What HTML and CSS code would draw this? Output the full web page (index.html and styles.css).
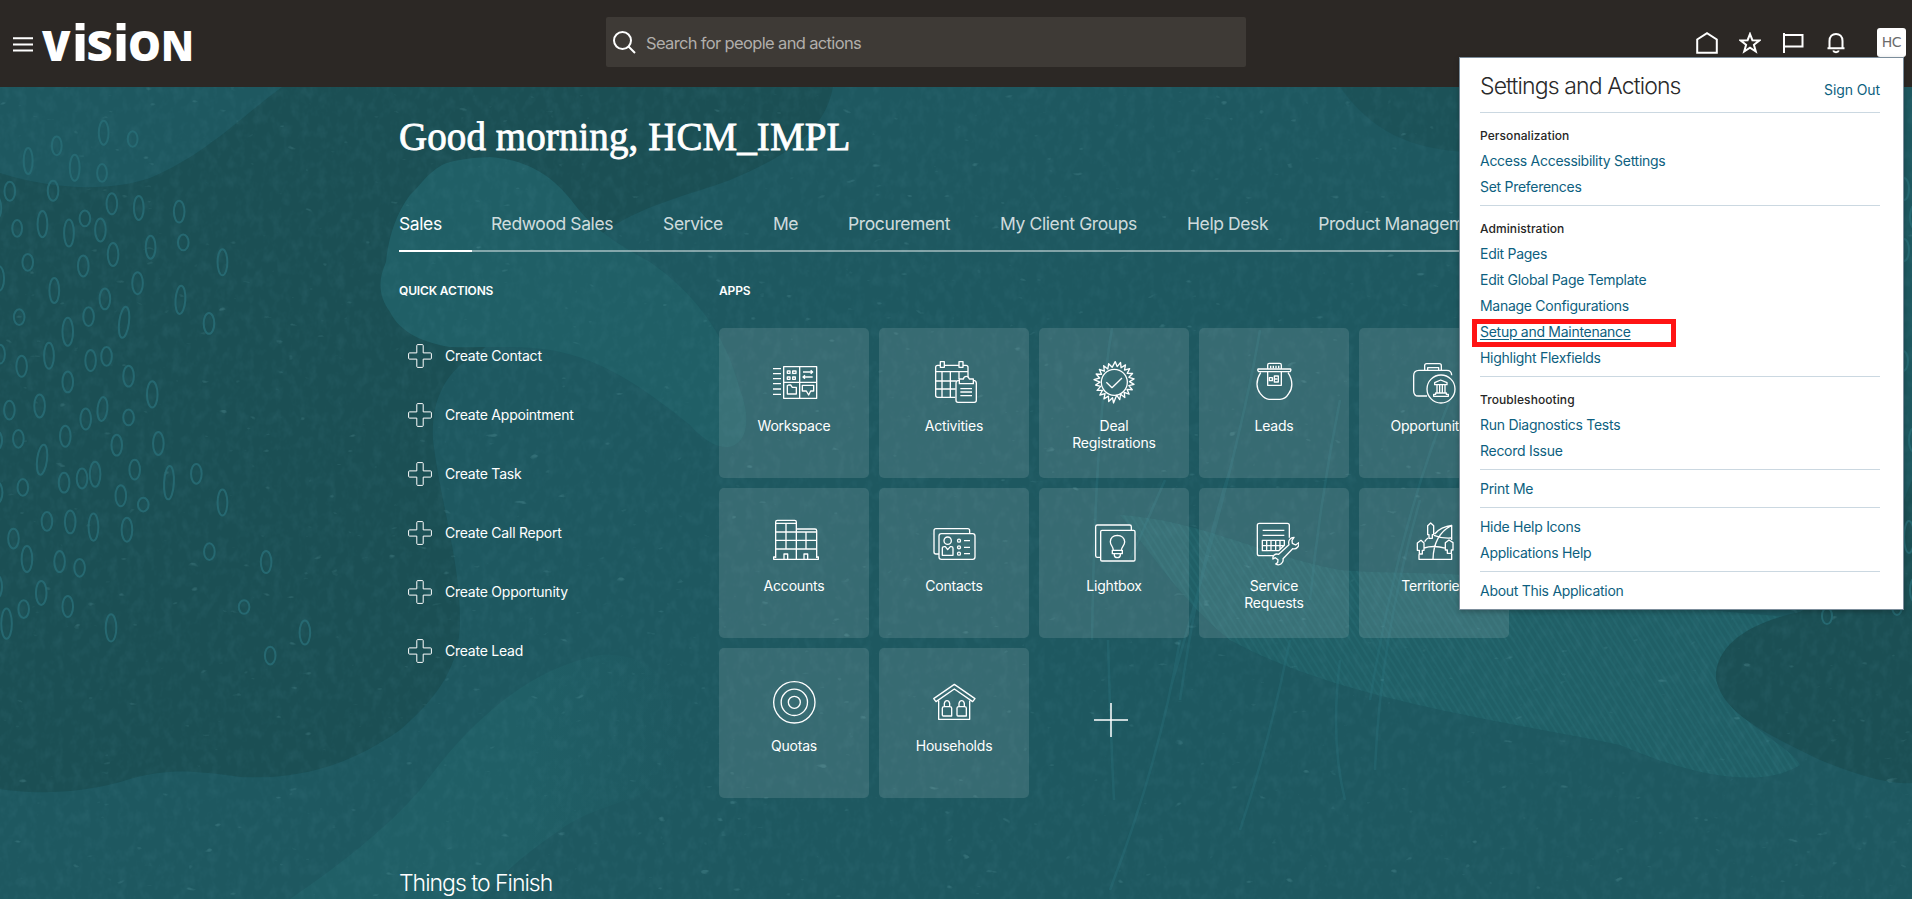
FILE: index.html
```html
<!DOCTYPE html>
<html lang="en">
<head>
<meta charset="utf-8">
<title>Vision</title>
<link rel="stylesheet" href="styles.css">
</head>
<body>
<svg class="backdrop" viewBox="0 0 1912 899" width="1912" height="899" aria-hidden="true">
  <defs>
    <filter id="grain" x="0" y="0" width="100%" height="100%">
      <feTurbulence type="fractalNoise" baseFrequency="0.11 0.08" numOctaves="3" seed="4"/>
      <feColorMatrix values="0 0 0 0 0.07  0 0 0 0 0.25  0 0 0 0 0.3  1.6 0 0 0 -0.7"/>
    </filter>
    <filter id="flecks" x="0" y="0" width="100%" height="100%">
      <feTurbulence type="fractalNoise" baseFrequency="0.07 0.13" numOctaves="2" seed="21"/>
      <feColorMatrix values="0 0 0 0 0.2  0 0 0 0 0.5  0 0 0 0 0.54  0 9 0 0 -6.9"/>
    </filter>
    <linearGradient id="fade" x1="0" y1="0" x2="1" y2="0"><stop offset="0" stop-color="#205f66"/><stop offset=".6" stop-color="#205f66"/><stop offset="1" stop-color="#205f66" stop-opacity="0"/></linearGradient>
    <pattern id="hatch" width="6" height="6" patternUnits="userSpaceOnUse" patternTransform="rotate(-32)">
      <path d="M2 0V6" stroke="#2a7379" stroke-width="1.4" opacity=".38"/>
    </pattern>
  </defs>
  <rect width="1912" height="899" fill="#1e5860"/>
  <path d="M282 87C240 118 205 155 150 178C115 190 60 192 0 173V789C30 794 80 795 130 779C170 768 195 771 240 777C300 780 350 765 400 730C440 695 460 665 460 620C460 560 440 500 433 440C431 400 445 370 480 352L600 235C640 205 690 195 730 180C790 155 825 130 833 87Z" fill="#1b4f54"/>
  <path d="M490 157C465 158 450 161 442 165C425 175 420 186 410 195C395 215 388 240 386 262C378 280 378 295 390 312C400 333 425 343 450 347C480 348 520 345 550 350C600 358 640 385 690 425C730 470 760 440 740 390C725 330 690 290 650 262C610 240 590 225 575 205C555 178 530 160 490 157Z" fill="#205f66"/>
  <path d="M290 899C340 865 385 830 420 790C470 720 530 668 600 655C660 650 690 700 680 760C665 800 600 800 560 830C530 850 500 875 480 899Z" fill="url(#fade)"/>
  <path d="M1340 87C1370 130 1410 150 1470 152V87Z" fill="#1b4f54" opacity=".6"/>
  <path d="M1120 515C1200 520 1260 555 1340 570C1400 575 1440 570 1510 580C1600 600 1700 610 1800 618C1760 640 1720 660 1716 680C1730 720 1790 745 1800 765C1760 790 1690 775 1620 745C1500 720 1340 700 1230 640C1180 600 1150 550 1120 515Z" fill="#205f66"/>
  <path d="M1120 515C1200 520 1260 555 1340 570C1400 575 1440 570 1510 580C1600 600 1700 610 1800 618C1760 640 1720 660 1716 680C1730 720 1790 745 1800 765C1760 790 1690 775 1620 745C1500 720 1340 700 1230 640C1180 600 1150 550 1120 515Z" fill="url(#hatch)"/>
  <path d="M1912 480L1880 560L1800 612C1750 622 1715 645 1716 678C1722 715 1770 735 1820 760C1850 772 1885 785 1912 783Z" fill="#1b4f54"/>
  <g fill="none" stroke="#28707a" stroke-width="2.5" opacity=".4">
    <path d="M1112 328Q1095 430 1092 640M1108 640Q1110 720 1114 800M1180 640Q1160 760 1110 890M1165 480L1130 560M1260 330Q1240 450 1170 690M1230 470Q1200 560 1180 700M1340 400Q1320 500 1310 600M1450 400Q1400 520 1370 700M1420 500Q1380 640 1375 770M1290 640Q1270 740 1240 830M1340 660Q1330 740 1345 800"/>
  </g>
  <rect y="87" width="1912" height="812" filter="url(#grain)" opacity=".2"/>
  <rect y="87" width="1912" height="812" filter="url(#flecks)" opacity=".2"/>
  <g transform="translate(0 80) scale(.40816 .5223)" class="pebbles">
    <ellipse cx="254" cy="101" rx="12" ry="23"/><ellipse cx="325" cy="113" rx="12" ry="15"/><ellipse cx="139" cy="126" rx="12" ry="18"/><ellipse cx="69" cy="155" rx="11" ry="25"/><ellipse cx="183" cy="168" rx="12" ry="25"/><ellipse cx="250" cy="178" rx="12" ry="17"/>
    <ellipse cx="24" cy="213" rx="13" ry="18"/><ellipse cx="130" cy="212" rx="13" ry="19"/><ellipse cx="274" cy="237" rx="13" ry="20"/><ellipse cx="340" cy="245" rx="12" ry="23"/><ellipse cx="439" cy="252" rx="13" ry="21"/><ellipse cx="208" cy="265" rx="13" ry="15"/><ellipse cx="104" cy="276" rx="12" ry="25"/><ellipse cx="42" cy="284" rx="12" ry="16"/><ellipse cx="169" cy="293" rx="12" ry="26"/><ellipse cx="246" cy="287" rx="13" ry="22"/><ellipse cx="449" cy="311" rx="13" ry="15"/><ellipse cx="369" cy="320" rx="12" ry="22"/><ellipse cx="277" cy="334" rx="13" ry="22"/><ellipse cx="545" cy="349" rx="12" ry="25"/><ellipse cx="68" cy="349" rx="13" ry="16"/><ellipse cx="204" cy="356" rx="13" ry="20"/><ellipse cx="337" cy="389" rx="13" ry="21"/><ellipse cx="133" cy="403" rx="12" ry="24"/><ellipse cx="257" cy="419" rx="13" ry="20"/><ellipse cx="442" cy="421" rx="12" ry="27" transform="rotate(5 442 421)"/><ellipse cx="47" cy="454" rx="13" ry="15"/><ellipse cx="217" cy="453" rx="13" ry="18"/><ellipse cx="304" cy="464" rx="12" ry="30" transform="rotate(10 304 464)"/><ellipse cx="512" cy="466" rx="13" ry="20"/><ellipse cx="166" cy="482" rx="13" ry="27"/><ellipse cx="120" cy="528" rx="12" ry="25"/><ellipse cx="261" cy="529" rx="13" ry="18"/><ellipse cx="222" cy="537" rx="13" ry="20"/><ellipse cx="53" cy="548" rx="13" ry="20"/><ellipse cx="315" cy="567" rx="13" ry="20"/><ellipse cx="166" cy="578" rx="13" ry="20"/><ellipse cx="373" cy="602" rx="13" ry="25"/><ellipse cx="97" cy="624" rx="13" ry="22"/><ellipse cx="23" cy="632" rx="13" ry="18"/><ellipse cx="251" cy="630" rx="12" ry="23" transform="rotate(8 251 630)"/><ellipse cx="210" cy="649" rx="13" ry="20"/><ellipse cx="315" cy="646" rx="13" ry="15"/><ellipse cx="160" cy="682" rx="13" ry="20"/><ellipse cx="45" cy="687" rx="13" ry="17"/><ellipse cx="388" cy="696" rx="13" ry="22"/><ellipse cx="286" cy="699" rx="13" ry="20"/><ellipse cx="103" cy="727" rx="12" ry="29" transform="rotate(10 103 727)"/><ellipse cx="330" cy="746" rx="13" ry="19"/><ellipse cx="233" cy="755" rx="13" ry="24"/><ellipse cx="481" cy="754" rx="13" ry="19"/><ellipse cx="201" cy="763" rx="13" ry="19"/><ellipse cx="157" cy="771" rx="13" ry="19"/><ellipse cx="414" cy="771" rx="12" ry="32" transform="rotate(4 414 771)"/><ellipse cx="56" cy="780" rx="13" ry="16"/><ellipse cx="296" cy="796" rx="13" ry="20"/><ellipse cx="545" cy="809" rx="12" ry="25"/><ellipse cx="351" cy="813" rx="13" ry="13"/><ellipse cx="115" cy="845" rx="13" ry="18"/><ellipse cx="172" cy="846" rx="13" ry="22"/><ellipse cx="229" cy="856" rx="12" ry="26"/><ellipse cx="311" cy="861" rx="13" ry="23"/><ellipse cx="33" cy="878" rx="13" ry="19"/><ellipse cx="513" cy="903" rx="13" ry="16"/><ellipse cx="66" cy="917" rx="13" ry="25"/><ellipse cx="146" cy="922" rx="13" ry="20"/><ellipse cx="652" cy="923" rx="13" ry="21"/><ellipse cx="195" cy="934" rx="13" ry="17"/><ellipse cx="101" cy="982" rx="13" ry="23"/><ellipse cx="166" cy="1008" rx="13" ry="20"/><ellipse cx="598" cy="1009" rx="13" ry="13"/><ellipse cx="58" cy="1013" rx="13" ry="17"/><ellipse cx="16" cy="1041" rx="13" ry="29"/><ellipse cx="272" cy="1049" rx="13" ry="26"/><ellipse cx="747" cy="1058" rx="13" ry="23"/><ellipse cx="662" cy="1102" rx="13" ry="17"/>
    <ellipse cx="-10" cy="245" rx="13" ry="22"/><ellipse cx="-3" cy="380" rx="13" ry="24"/><ellipse cx="0" cy="525" rx="12" ry="18"/><ellipse cx="-8" cy="690" rx="13" ry="18"/><ellipse cx="-7" cy="790" rx="13" ry="20"/><ellipse cx="-8" cy="970" rx="13" ry="22"/>
  </g>
  <g class="pebbles">
    <ellipse cx="1827" cy="616" rx="5" ry="8"/><ellipse cx="1897" cy="606" rx="5" ry="9"/><ellipse cx="1904" cy="189" rx="5" ry="11"/><ellipse cx="1915" cy="217" rx="5" ry="12"/><ellipse cx="1904" cy="250" rx="5" ry="11"/><ellipse cx="1903" cy="361" rx="5" ry="10"/><ellipse cx="1914" cy="440" rx="5" ry="12"/><ellipse cx="1909" cy="537" rx="5" ry="16"/><ellipse cx="1915" cy="590" rx="5" ry="12"/>
  </g>
</svg>

<header class="topbar">
  <button class="menu-button" aria-label="Navigator"><svg width="20" height="15" viewBox="0 0 20 15"><path d="M0 1.2H20M0 7.4H20M0 13.6H20" stroke="#fff" stroke-width="2"/></svg></button>
  <svg class="logo" width="152" height="44" viewBox="0 0 152 44" role="img">
    <text x="0" y="42" class="caps" textLength="28.500" lengthAdjust="spacingAndGlyphs">V</text>
    <text x="29.500" y="42" class="dotted">i</text>
    <text x="44.500" y="42" class="caps" textLength="26" lengthAdjust="spacingAndGlyphs">S</text>
    <text x="70.500" y="42" class="dotted">i</text>
    <text x="86" y="42" class="caps" textLength="33" lengthAdjust="spacingAndGlyphs">O</text>
    <text x="119" y="42" class="caps" textLength="33" lengthAdjust="spacingAndGlyphs">N</text>
  </svg>
  <div class="search">
    <svg width="23" height="23" viewBox="0 0 23 23" fill="none" stroke="#fff" stroke-width="2"><circle cx="9.500" cy="9.500" r="8.500"/><path d="M15.500 15.500L22 22"/></svg>
    <span>Search for people and actions</span>
  </div>
  <nav class="tools">
    <svg width="22" height="22" viewBox="0 0 22 22"><path d="M1.200 20.800V7.500L11 1.200L20.800 7.500V20.800Z"/></svg>
    <svg width="22" height="22" viewBox="0 0 22 22"><path d="M11 2L13.400 8.200L20.300 8.500L14.900 12.800L16.800 19.500L11 15.700L5.200 19.500L7.100 12.800L1.700 8.500L8.600 8.200Z"/></svg>
    <svg width="22" height="22" viewBox="0 0 22 22"><path d="M2 1V21M2 3H20.500V14.500H2"/></svg>
    <svg width="22" height="22" viewBox="0 0 22 22"><path d="M2.500 16.200H19.500M4.500 16V9C4.500 4.500 7.400 2 11 2S17.500 4.500 17.500 9V16M8.200 18.500C9 20.800 13 20.800 13.800 18.500"/></svg>
    <span class="avatar">HC</span>
  </nav>
</header>

<main class="content">
  <h1>Good morning, HCM_IMPL</h1>
  <nav class="tabs">
    <a class="active">Sales</a><a>Redwood Sales</a><a>Service</a><a>Me</a><a>Procurement</a><a>My Client Groups</a><a>Help Desk</a><a>Product Management</a>
  </nav>
  <div class="columns">
    <section class="quick">
      <h2>QUICK ACTIONS</h2>
      <ul>
        <li><svg viewBox="0 0 24 24"><use href="#cross"/></svg>Create Contact</li>
        <li><svg viewBox="0 0 24 24"><use href="#cross"/></svg>Create Appointment</li>
        <li><svg viewBox="0 0 24 24"><use href="#cross"/></svg>Create Task</li>
        <li><svg viewBox="0 0 24 24"><use href="#cross"/></svg>Create Call Report</li>
        <li><svg viewBox="0 0 24 24"><use href="#cross"/></svg>Create Opportunity</li>
        <li><svg viewBox="0 0 24 24"><path id="cross" d="M9.700 .6H14.300Q15.200 .6 15.200 1.500V8.900H22.500Q23.400 8.900 23.400 9.800V14.200Q23.400 15.100 22.500 15.100H15.200V22.500Q15.200 23.400 14.300 23.400H9.700Q8.800 23.400 8.800 22.500V15.100H1.500Q.6 15.100 .6 14.200V9.800Q.6 8.900 1.500 8.900H8.800V1.500Q8.800 .6 9.700 .6Z"/></svg>Create Lead</li>
      </ul>
    </section>
    <section class="apps">
      <h2>APPS</h2>
      <div class="grid">
        <a class="card"><svg viewBox="207 111 150 150"><path d="M251 140H350V235H251ZM299 140V235M251 187H350M219 146H243M219 161H243M219 176H243M219 191H243M219 207H243M219 223H243"/><path d="M262 153H270V160H262ZM278 153H288V160H278ZM262 171H270V178H262ZM278 171H286V178H278ZM309 156H338M332 151L338 156L332 161M338 171H309M315 166L309 171L315 176M262 222V197L266 195H272L277 202H289V222ZM307 196H341V213H332L326 225L319 213H307Z"/></svg>Workspace</a>
        <a class="card"><svg viewBox="687 111 150 150"><path d="M766 232H713Q707 232 707 226V142Q707 136 713 136H720M733 136H776M790 136H798Q804 136 804 142V172M707 155H804M707 183H770M707 207H767M726 155V232M751 155V232M777 155V178M721 125H733V142H721ZM777 125H789V142H777Z"/><path d="M778 181Q768 181 768 190V241Q768 247 774 247H823Q829 247 829 241V190Q829 181 820 181M778 191V177H790Q792 169 799 169Q805 169 808 177H820V191ZM781 206H816M781 216H816M781 227H816"/></svg>Activities</a>
        <a class="card"><svg viewBox="1167 111 150 150"><circle cx="1243" cy="187" r="39"/><path d="M1219 187L1236 203L1266 174"/><path d="M1245.600 124.800L1251.400 139.700L1261.700 127.500L1263.200 143.400L1276.500 134.600L1273.500 150.300L1288.900 145.900L1281.600 160.100L1297.700 160.400L1286.700 171.900L1302.200 176.700L1288.400 184.700L1302 193.300L1286.400 196.900L1296.900 209.200L1280.900 208L1287.400 222.600L1272.500 216.800L1274.500 232.700L1261.900 222.900L1259.200 238.600L1250 225.600L1240.500 249L1237.500 233L1226 244.500L1225.500 228.500L1211.700 236.600L1215.300 221.100L1199.700 225L1207.300 210.900L1191.300 211.100L1202 199.200L1186.600 195L1200.100 186.500L1182 179L1199 174L1188.500 162L1204.600 163L1198 148L1213.100 153.700L1211 137L1223.500 147L1226 131L1236.500 142Z"/></svg>Deal<br>Registrations</a>
        <a class="card"><svg viewBox="657 111 150 150"><path d="M684 147H782Q784 151 780 155H686Q682 151 684 147ZM713 147V135Q713 130 718 130H749Q754 130 754 135V147M713 157V196H754V157M692 158C676 182 679 206 691 221Q705 238 717 238H750Q766 238 776 221C788 206 790 182 774 158"/><path d="M722 137V145M730 137V145M738 137V145M746 137V145M718 173H727V182H718ZM733 168H745V186H733ZM733 177H742"/></svg>Leads</a>
        <a class="card"><svg viewBox="1137 111 150 150"><path d="M1191 228H1165Q1151 228 1151 212V167Q1151 151 1167 151H1250Q1265 151 1265 166M1184 151V137Q1184 131 1190 131H1228Q1234 131 1234 137V151M1193 150V143H1226V150"/><circle cx="1233" cy="207" r="42"/><path d="M1214 194V188L1232 180L1251 188V194ZM1221 195V219M1229 195V219M1237 195V219M1245 195V219M1217 219H1249V223H1255V229H1211V223H1217Z"/></svg>Opportunities</a>
        <a class="card"><svg viewBox="207 111 150 150"><path d="M227 234V126Q227 121 232 121H284Q289 121 289 126V238M289 147H345Q350 147 350 152V234M227 130H289M227 156H350M227 181H350M227 207H350M258 130V207M318 156V207M227 231H221V238H355V231H350M252 236V222H263V236M312 236V222H323V236"/></svg>Accounts</a>
        <a class="card"><svg viewBox="687 111 150 150"><rect x="717" y="161" width="108" height="77" rx="7"/><path d="M717 222H708Q702 222 702 216V152Q702 146 708 146H803Q809 146 809 152V160M727 226V205Q727 200 733 200H736L743 209L751 200H754Q759 200 759 205V226ZM792 182H810M792 202H810M792 221H810"/><circle cx="743" cy="182" r="11"/><circle cx="777" cy="182" r="4.500"/><circle cx="777" cy="202" r="4.500"/><circle cx="777" cy="221" r="4.500"/></svg>Contacts</a>
        <a class="card"><svg viewBox="1167 111 150 150"><rect x="1202" y="151" width="103" height="92" rx="4"/><path d="M1202 232H1192Q1187 232 1187 227V140Q1187 135 1192 135H1289Q1294 135 1294 140V150M1240 211C1240 199 1231 197 1231 185Q1232 167 1252 166Q1272 167 1274 185C1274 197 1265 199 1264 211ZM1237 211H1267V221H1237ZM1243 221V226Q1244 233 1252 233Q1260 233 1261 226V221"/></svg>Lightbox</a>
        <a class="card"><svg viewBox="657 111 150 150"><path d="M731 227H688Q682 227 682 221V136Q682 130 688 130H772Q778 130 778 136V173M698 151H763M698 166H763M697 181H763V196L746 212H697ZM697 197H760M710 181V212M723 181V212M737 181V212M750 181V206"/><path d="M792 172C782 172 773 181 777 194L746 223C735 219 727 228 729 237L736 233L744 239L743 248L737 252C749 259 762 249 759 236L788 206C800 210 809 197 806 188L797 195L787 190L786 181Z"/></svg>Service<br>Requests</a>
        <a class="card"><svg viewBox="1137 111 150 150"><path d="M1167 223V238H1265V221M1265 180V136C1247 138 1224 148 1214 162M1184 185Q1188 178 1194 174M1182 204C1206 196 1227 199 1248 205M1212 166C1230 174 1246 175 1263 174M1265 136C1228 155 1210 190 1209 238M1197 171V164H1193V137L1202 129L1211 137V164H1207V175H1197ZM1168 222V211H1162V189L1173 181L1182 189V211H1177V222ZM1252 220V210H1246V188L1257 180L1269 188V210H1264V220Z"/></svg>Territories</a>
        <a class="card"><svg viewBox="207 111 150 150"><circle cx="283" cy="187" r="62"/><circle cx="283" cy="187" r="39.500"/><circle cx="283" cy="187" r="18"/></svg>Quotas</a>
        <a class="card"><svg viewBox="687 111 150 150"><path d="M763 133L825 176L818 185L763 147L708 185L701 176ZM716 182V238H809V182M730 228Q727 228 727 225V204Q727 200 733 200V190Q735 182 741 182Q747 182 749 190V200Q755 200 755 204V228ZM774 228Q771 228 771 225V204Q771 200 777 200V190Q779 182 785 182Q791 182 793 190V200Q799 200 799 204V228ZM733 200H749M777 200H793"/></svg>Households</a>
        <a class="add"><svg width="34" height="34" viewBox="0 0 34 34"><path d="M17 0V34M0 17H34" stroke="#fff" stroke-width="1.500"/></svg></a>
      </div>
    </section>
  </div>
  <h3>Things to Finish</h3>
</main>

<aside class="panel">
  <div class="panel-head"><h4>Settings and Actions</h4><a>Sign Out</a></div>
  <section><h5>Personalization</h5><a>Access Accessibility Settings</a><a>Set Preferences</a></section>
  <section><h5>Administration</h5><a>Edit Pages</a><a>Edit Global Page Template</a><a>Manage Configurations</a><a class="marked">Setup and Maintenance</a><a>Highlight Flexfields</a></section>
  <section><h5>Troubleshooting</h5><a>Run Diagnostics Tests</a><a>Record Issue</a></section>
  <section><a>Print Me</a></section>
  <section><a>Hide Help Icons</a><a>Applications Help</a></section>
  <section><a>About This Application</a></section>
</aside>
</body>
</html>
```

FILE: styles.css
```css
*, *::before { box-sizing: border-box; }
body { margin: 0; width: 1912px; height: 899px; overflow: hidden; position: relative; background: #1e5860; color: #fff; font-family: Inter, "Liberation Sans", sans-serif; font-size: 14px; }
h1, h2, h3, h4, h5, ul { margin: 0; padding: 0; font-weight: 400; }
ul { list-style: none; }
.backdrop { position: absolute; inset: 0; z-index: -1; }
.pebbles ellipse { fill: none; stroke: #286d76; stroke-width: 2px; vector-effect: non-scaling-stroke; opacity: .85; }

.topbar { height: 87px; background: #2c2825; display: flex; align-items: flex-start; }
.menu-button { margin: 36px 0 0 13px; padding: 0; border: 0; background: none; width: 20px; height: 16px; line-height: 0; }
.logo { margin: 19px 0 0 9px; fill: #fff; font-family: "Open Sans", sans-serif; font-weight: 800; overflow: visible; flex: none; }
.logo .caps { font-size: 42px; }
.logo .dotted { font-family: "DejaVu Sans", sans-serif; font-weight: 700; font-size: 50px; }
.search { flex: none; margin: 17px 0 0 412px; width: 640px; height: 50px; background: #3e3a36; border-radius: 2px; padding-left: 7px; display: flex; align-items: center; gap: 10px; color: #b1aeab; font-size: 16.500px; letter-spacing: -.65px; }
.search span { padding-top: 1px; }
.tools { margin: 28px 0 0 450px; display: flex; align-items: center; gap: 21px; height: 29px; }
.tools svg { flex: none; fill: none; stroke: #fff; stroke-width: 2; }
.avatar { flex: none; margin-left: 9px; width: 29px; height: 29px; background: #fff; border-radius: 3px; color: #6b6b6b; font: 14px/29px "DejaVu Sans", sans-serif; text-align: center; letter-spacing: -.5px; }

.content { width: 1110px; margin-left: 399px; }
h1 { padding-top: 25px; font: 39px/50px "Liberation Serif", serif; -webkit-text-stroke: .8px #fff; letter-spacing: .08px; white-space: nowrap; }
.tabs { margin-top: 42px; height: 48px; border-bottom: 2px solid rgba(255,255,255,.45); display: flex; gap: 50px; font-size: 17.500px; letter-spacing: -.4px; line-height: 40px; white-space: nowrap; }
.tabs a { color: rgba(255,255,255,.8); }
.tabs .active { color: #fff; height: 48px; width: 73px; border-bottom: 2px solid #fff; margin-right: -31px; }
.columns { display: flex; margin-top: 28px; }
.quick { width: 320px; }
h2 { font-size: 12px; line-height: 22px; font-weight: 600; letter-spacing: -.15px; }
.quick ul { padding: 24px 0 0 9px; }
.quick li { height: 59px; display: flex; align-items: center; gap: 13px; letter-spacing: -.23px; }
.quick svg { width: 24px; height: 24px; fill: none; stroke: #fff; stroke-width: 1; }
.grid { margin-top: 26px; display: grid; grid-template-columns: repeat(5, 150px); grid-auto-rows: 150px; gap: 10px; }
.card { background: rgba(255,255,255,.115); border-radius: 5px; display: block; text-align: center; padding-top: 29px; line-height: 17px; letter-spacing: -.2px; }
.card svg { display: block; width: 50px; height: 50px; margin: 0 auto 10px; fill: none; stroke: #fff; stroke-width: 4; stroke-linejoin: round; }
.add { display: grid; place-items: center; padding: 0 6px 7px 0; }
h3 { margin-top: 68px; font-size: 23px; line-height: 34px; font-weight: 300; letter-spacing: -1px; }

.panel { position: absolute; left: 1459px; top: 57px; width: 445px; height: 553px; background: #fff; border: 1px solid #7b8d9b; box-shadow: 0 2px 5px rgba(0,0,0,.25); padding: 0 23px 0 20px; color: #0d5f80; letter-spacing: -.28px; }
.panel-head { height: 55px; border-bottom: 1px solid #cbd8e1; display: flex; justify-content: space-between; }
.panel h4 { color: #2a2a2a; font-size: 23px; font-weight: 300; line-height: 57px; letter-spacing: -.88px; }
.panel-head a { line-height: 63px; letter-spacing: -.1px; }
.panel section { border-bottom: 1px solid #cbd8e1; padding: 6px 0 5px; }
.panel section:last-child { border: 0; }
.panel h5 { color: #262626; font-size: 12px; font-weight: 500; line-height: 24px; height: 29px; padding-top: 5px; letter-spacing: .08px; }
.panel section a { display: block; line-height: 26px; height: 26px; position: relative; }
.marked { text-decoration: underline; text-underline-offset: 2px; }
.marked::before { content: ""; position: absolute; left: -8px; top: 0; width: 204px; height: 28px; border: 5px solid #ff1414; }
```
